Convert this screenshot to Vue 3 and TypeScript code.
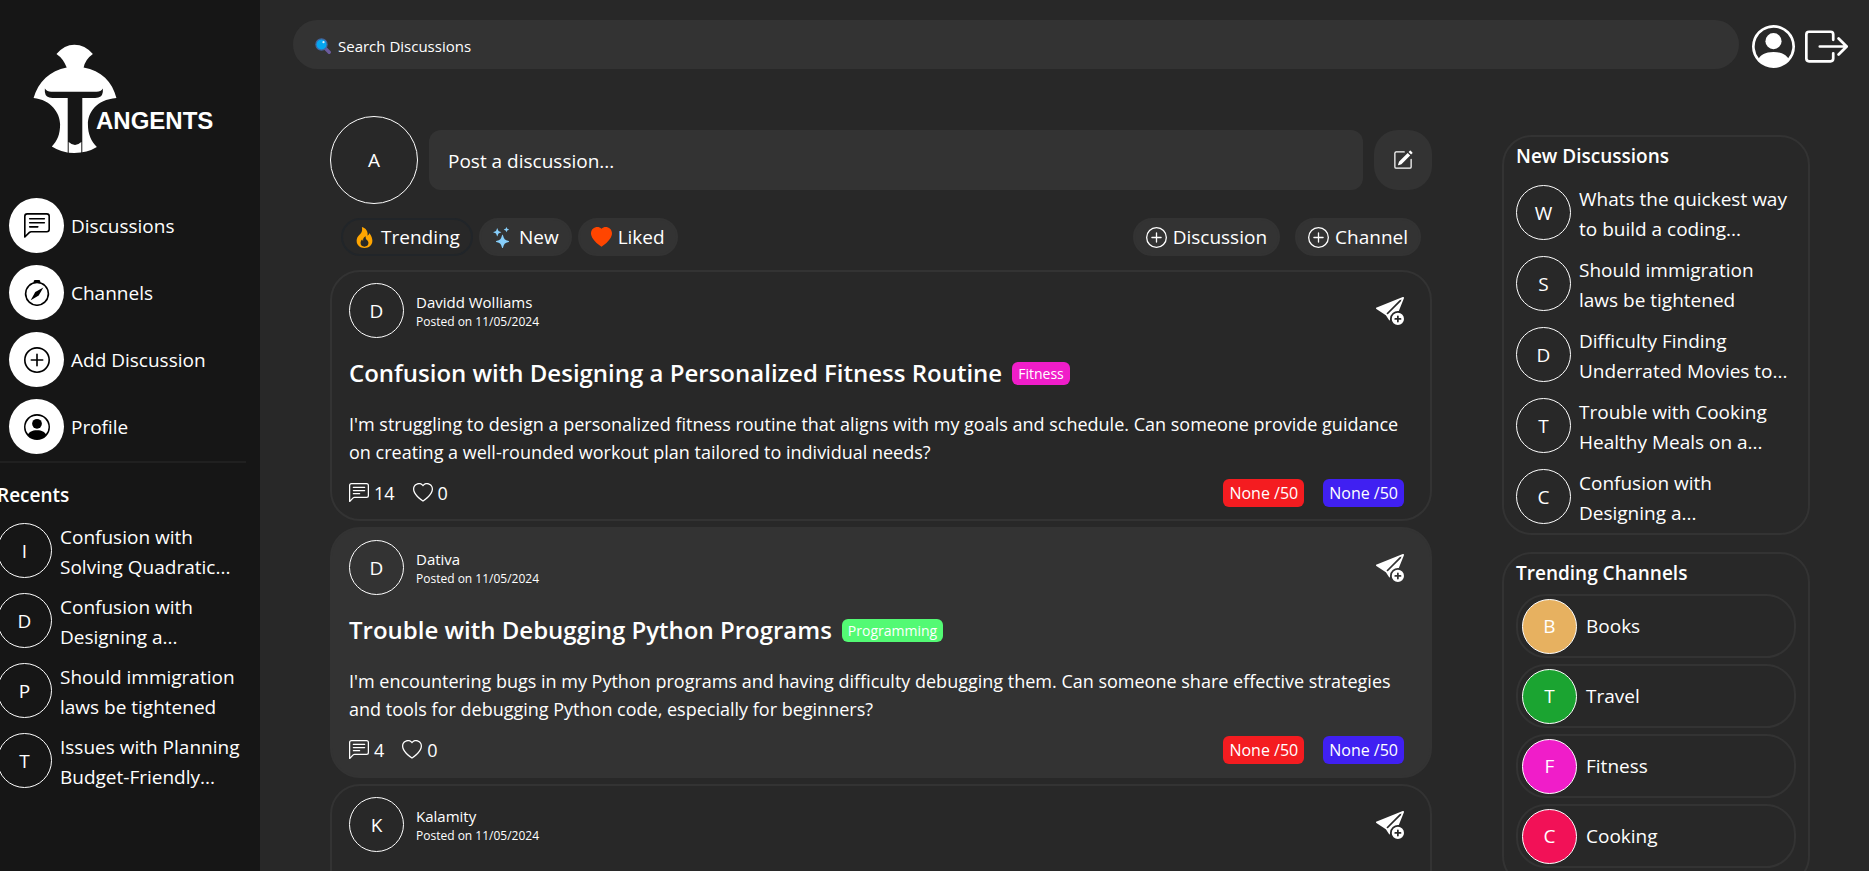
<script setup lang="ts">
import { ref } from 'vue'

type IconName = keyof typeof icons

const icons = {
  chat: [
    'M14 1a1 1 0 0 1 1 1v8a1 1 0 0 1-1 1H4.414A2 2 0 0 0 3 11.586l-2 2V2a1 1 0 0 1 1-1zM2 0a2 2 0 0 0-2 2v12.793a.5.5 0 0 0 .854.353l2.853-2.853A1 1 0 0 1 4.414 12H14a2 2 0 0 0 2-2V2a2 2 0 0 0-2-2z',
    'M3 3.5a.5.5 0 0 1 .5-.5h9a.5.5 0 0 1 0 1h-9a.5.5 0 0 1-.5-.5M3 6a.5.5 0 0 1 .5-.5h9a.5.5 0 0 1 0 1h-9A.5.5 0 0 1 3 6m0 2.5a.5.5 0 0 1 .5-.5h5a.5.5 0 0 1 0 1h-5a.5.5 0 0 1-.5-.5',
  ],
  compass: [
    'M8 16.016a7.5 7.5 0 0 0 1.962-14.74A1 1 0 0 0 9 0H7a1 1 0 0 0-.962 1.276A7.5 7.5 0 0 0 8 16.016m6.5-7.5a6.5 6.5 0 1 1-13 0 6.5 6.5 0 0 1 13 0',
    'm6.94 7.44 4.95-2.83-2.83 4.95-4.949 2.83z',
  ],
  plus: [
    'M8 15A7 7 0 1 1 8 1a7 7 0 0 1 0 14m0 1A8 8 0 1 0 8 0a8 8 0 0 0 0 16',
    'M8 4a.5.5 0 0 1 .5.5v3h3a.5.5 0 0 1 0 1h-3v3a.5.5 0 0 1-1 0v-3h-3a.5.5 0 0 1 0-1h3v-3A.5.5 0 0 1 8 4',
  ],
  person: [
    'M11 6a3 3 0 1 1-6 0 3 3 0 0 1 6 0',
    'M0 8a8 8 0 1 1 16 0A8 8 0 0 1 0 8m8-7a7 7 0 0 0-5.468 11.37C3.242 11.226 4.805 10 8 10s4.757 1.225 5.468 2.37A7 7 0 0 0 8 1',
  ],
  logout: [
    'M10 12.5a.5.5 0 0 1-.5.5h-8a.5.5 0 0 1-.5-.5v-9a.5.5 0 0 1 .5-.5h8a.5.5 0 0 1 .5.5v2a.5.5 0 0 0 1 0v-2A1.5 1.5 0 0 0 9.5 2h-8A1.5 1.5 0 0 0 0 3.5v9A1.5 1.5 0 0 0 1.5 14h8a1.5 1.5 0 0 0 1.5-1.5v-2a.5.5 0 0 0-1 0z',
    'M15.854 8.354a.5.5 0 0 0 0-.708l-3-3a.5.5 0 0 0-.708.708L14.293 7.5H5.5a.5.5 0 0 0 0 1h8.793l-2.147 2.146a.5.5 0 0 0 .708.708z',
  ],
  edit: [
    'M15.502 1.94a.5.5 0 0 1 0 .706L14.459 3.69l-2-2L13.502.646a.5.5 0 0 1 .707 0l1.293 1.293zm-1.75 2.456-2-2L4.939 9.21a.5.5 0 0 0-.121.196l-.805 2.414a.25.25 0 0 0 .316.316l2.414-.805a.5.5 0 0 0 .196-.12l6.813-6.814z',
    'M1 13.5A1.5 1.5 0 0 0 2.5 15h11a1.5 1.5 0 0 0 1.5-1.5v-6a.5.5 0 0 0-1 0v6a.5.5 0 0 1-.5.5h-11a.5.5 0 0 1-.5-.5v-11a.5.5 0 0 1 .5-.5H9a.5.5 0 0 0 0-1H2.5A1.5 1.5 0 0 0 1 2.5z',
  ],
  fire: [
    'M8 16c3.314 0 6-2 6-5.5 0-1.5-.5-4-2.5-6 .25 1.5-1.25 2-1.25 2C11 4 9 .5 6 0c.357 2 .5 4-2 6-1.25 1-2 2.729-2 4.5C2 14 4.686 16 8 16m0-1c-1.657 0-3-1-3-2.75 0-.75.25-2 1.25-3C6.125 10 7 10.5 7 10.5c-.375-1.25.5-3.25 2-3.5-.179 1-.25 2 1 3 .625.5 1 1.364 1 2.25C11 14 9.657 15 8 15',
  ],
  stars: [
    'M7.657 6.247c.11-.33.576-.33.686 0l.645 1.937a2.89 2.89 0 0 0 1.829 1.828l1.936.645c.33.11.33.576 0 .686l-1.937.645a2.89 2.89 0 0 0-1.828 1.829l-.645 1.936a.361.361 0 0 1-.686 0l-.645-1.937a2.89 2.89 0 0 0-1.828-1.828l-1.937-.645a.361.361 0 0 1 0-.686l1.937-.645a2.89 2.89 0 0 0 1.828-1.828zM3.794 1.148a.217.217 0 0 1 .412 0l.387 1.162c.173.518.579.924 1.097 1.097l1.162.387a.217.217 0 0 1 0 .412l-1.162.387A1.73 1.73 0 0 0 4.593 5.69l-.387 1.162a.217.217 0 0 1-.412 0L3.407 5.69A1.73 1.73 0 0 0 2.31 4.593l-1.162-.387a.217.217 0 0 1 0-.412l1.162-.387A1.73 1.73 0 0 0 3.407 2.31zM10.863.099a.145.145 0 0 1 .274 0l.258.774c.115.346.386.617.732.732l.774.258a.145.145 0 0 1 0 .274l-.774.258a1.16 1.16 0 0 0-.732.732l-.258.774a.145.145 0 0 1-.274 0l-.258-.774a1.16 1.16 0 0 0-.732-.732L9.1 2.137a.145.145 0 0 1 0-.274l.774-.258c.346-.115.617-.386.732-.732z',
  ],
  heartFill: ['M8 1.314C12.438-3.248 23.534 4.735 8 15-7.534 4.736 3.562-3.248 8 1.314'],
  heart: [
    'm8 2.748-.717-.737C5.6.281 2.514.878 1.4 3.053c-.523 1.023-.641 2.5.314 4.385.92 1.815 2.834 3.989 6.286 6.357 3.452-2.368 5.365-4.542 6.286-6.357.955-1.886.838-3.362.314-4.385C13.486.878 10.4.28 8.717 2.01zM8 15C-7.333 4.868 3.279-3.04 7.824 1.143q.09.083.176.171a3 3 0 0 1 .176-.17C12.72-3.042 23.333 4.867 8 15',
  ],
  send: [
    'M15.964.686a.5.5 0 0 0-.65-.65L.767 5.855H.766l-.452.18a.5.5 0 0 0-.082.887l.41.26.001.002 4.995 3.178 1.59 2.498C8 14 8 13 8 12.5a4.5 4.5 0 0 1 5.026-4.47zm-1.833 1.89L6.637 10.07l-.215-.338a.5.5 0 0 0-.154-.154l-.338-.215 7.494-7.494 1.178-.471z',
    'M16 12.5a3.5 3.5 0 1 1-7 0 3.5 3.5 0 0 1 7 0m-3.5-2a.5.5 0 0 0-.5.5v1h-1a.5.5 0 0 0 0 1h1v1a.5.5 0 0 0 1 0v-1h1a.5.5 0 0 0 0-1h-1v-1a.5.5 0 0 0-.5-.5',
  ],
}

interface NavItem { label: string; icon: IconName }
interface Topic { initial: string; lines: [string, string] }
interface Channel { name: string; color: string }
interface Post {
  author: string
  date: string
  title?: string
  tag?: Channel
  body?: string
  comments?: number
  likes?: number
}

const nav: NavItem[] = [
  { label: 'Discussions', icon: 'chat' },
  { label: 'Channels', icon: 'compass' },
  { label: 'Add Discussion', icon: 'plus' },
  { label: 'Profile', icon: 'person' },
]

const recents: Topic[] = [
  { initial: 'I', lines: ['Confusion with', 'Solving Quadratic...'] },
  { initial: 'D', lines: ['Confusion with', 'Designing a...'] },
  { initial: 'P', lines: ['Should immigration', 'laws be tightened'] },
  { initial: 'T', lines: ['Issues with Planning', 'Budget-Friendly...'] },
]

const newest: Topic[] = [
  { initial: 'W', lines: ['Whats the quickest way', 'to build a coding...'] },
  { initial: 'S', lines: ['Should immigration', 'laws be tightened'] },
  { initial: 'D', lines: ['Difficulty Finding', 'Underrated Movies to...'] },
  { initial: 'T', lines: ['Trouble with Cooking', 'Healthy Meals on a...'] },
  { initial: 'C', lines: ['Confusion with', 'Designing a...'] },
]

const channels: Channel[] = [
  { name: 'Books', color: '#e7b160' },
  { name: 'Travel', color: '#1ba431' },
  { name: 'Fitness', color: '#f01dc9' },
  { name: 'Cooking', color: '#f21157' },
]

const filters: { label: string; icon: IconName }[] = [
  { label: 'Trending', icon: 'fire' },
  { label: 'New', icon: 'stars' },
  { label: 'Liked', icon: 'heartFill' },
]

const posts: Post[] = [
  {
    author: 'Davidd Wolliams',
    date: '11/05/2024',
    title: 'Confusion with Designing a Personalized Fitness Routine',
    tag: { name: 'Fitness', color: '#f01dc9' },
    body: "I'm struggling to design a personalized fitness routine that aligns with my goals and schedule. Can someone provide guidance on creating a well-rounded workout plan tailored to individual needs?",
    comments: 14,
    likes: 0,
  },
  {
    author: 'Dativa',
    date: '11/05/2024',
    title: 'Trouble with Debugging Python Programs',
    tag: { name: 'Programming', color: '#53fa74' },
    body: "I'm encountering bugs in my Python programs and having difficulty debugging them. Can someone share effective strategies and tools for debugging Python code, especially for beginners?",
    comments: 4,
    likes: 0,
  },
  { author: 'Kalamity', date: '11/05/2024' },
]

const activeFilter = ref('Trending')
const query = ref('')
const draft = ref('')
</script>

<template>
  <div class="app">
    <aside class="sidebar">
      <a class="logo" href="#" aria-label="Tangents">
        <svg class="helmet" viewBox="99 132 252 332" aria-hidden="true">
          <path
            fill="#fff"
            d="M169 162Q193 134 223 134Q255 134 279 162Q256 178 251 203C304 212 338 246 350 295C288 300 264 340 264 374C264 404 274 425 291 443Q262 461 223 461Q186 461 155 441C172 424 180 404 180 374C180 340 152 300 100 295C114 246 150 212 200 203Q190 176 169 162Z"
          />
          <path
            fill="#161616"
            d="M134 266Q141 276 153 276H290Q303 276 309 266V277Q307 295 286 295H247V461H244V428Q225 446 206 428V461H203V295H157Q136 295 134 277Z"
          />
        </svg>
        <span class="wordmark">ANGENTS</span>
      </a>

      <nav class="nav">
        <a v-for="item in nav" :key="item.label" class="nav-link" href="#">
          <span class="nav-icon">
            <svg viewBox="0 0 16 16" aria-hidden="true">
              <path v-for="d in icons[item.icon]" :key="d" :d="d" fill-rule="evenodd" />
            </svg>
          </span>
          {{ item.label }}
        </a>
      </nav>

      <section class="recents">
        <h2 class="heading">Recents</h2>
        <a v-for="(topic, i) in recents" :key="i" class="topic" href="#">
          <span class="avatar">{{ topic.initial }}</span>
          <span>{{ topic.lines[0] }}<br />{{ topic.lines[1] }}</span>
        </a>
      </section>
    </aside>

    <div class="page">
      <header class="topbar">
        <label class="search">
          <svg class="lens" viewBox="0 0 16 16" aria-hidden="true">
            <path d="M10 10l4.200 4.200" stroke="#6b5b9e" stroke-width="3.400" stroke-linecap="round" />
            <circle cx="6.500" cy="6.500" r="5.600" fill="#05a6f0" stroke="#45659f" stroke-width="1.200" />
            <circle cx="8.500" cy="4.200" r="1.100" fill="#d8f3ff" />
          </svg>
          <input v-model="query" type="search" placeholder="Search Discussions" aria-label="Search Discussions" />
        </label>
        <button class="top-button" type="button" aria-label="Account">
          <svg viewBox="0 0 16 16"><path v-for="d in icons.person" :key="d" :d="d" fill-rule="evenodd" /></svg>
        </button>
        <button class="top-button" type="button" aria-label="Log out">
          <svg viewBox="0 0 16 16"><path v-for="d in icons.logout" :key="d" :d="d" /></svg>
        </button>
      </header>

      <div class="columns">
        <main class="feed">
          <form class="composer" @submit.prevent>
            <span class="avatar large">A</span>
            <input v-model="draft" type="text" placeholder="Post a discussion..." aria-label="Post a discussion" />
            <button type="submit" aria-label="Write">
              <svg viewBox="0 0 16 16"><path v-for="d in icons.edit" :key="d" :d="d" /></svg>
            </button>
          </form>

          <div class="toolbar">
            <button
              v-for="f in filters"
              :key="f.label"
              type="button"
              class="pill"
              :class="[f.icon, { active: activeFilter === f.label }]"
              @click="activeFilter = f.label"
            >
              <svg viewBox="0 0 16 16" aria-hidden="true">
                <path v-for="d in icons[f.icon]" :key="d" :d="d" />
              </svg>
              {{ f.label }}
            </button>
            <div class="create">
              <button v-for="kind in ['Discussion', 'Channel']" :key="kind" type="button" class="pill">
                <svg viewBox="0 0 16 16" aria-hidden="true">
                  <path v-for="d in icons.plus" :key="d" :d="d" />
                </svg>
                {{ kind }}
              </button>
            </div>
          </div>

          <article v-for="post in posts" :key="post.author" class="post">
            <div class="post-head">
              <span class="avatar">{{ post.author[0] }}</span>
              <div class="byline">
                <a href="#">{{ post.author }}</a>
                <small>Posted on {{ post.date }}</small>
              </div>
              <button type="button" class="send" aria-label="Share">
                <svg viewBox="0 0 16 16"><path v-for="d in icons.send" :key="d" :d="d" /></svg>
              </button>
            </div>
            <template v-if="post.title && post.tag">
              <div class="post-title">
                <h3>{{ post.title }}</h3>
                <span class="tag" :style="{ backgroundColor: post.tag.color }">{{ post.tag.name }}</span>
              </div>
              <p>{{ post.body }}</p>
              <div class="post-foot">
                <button type="button" class="count" aria-label="Comments">
                  <svg viewBox="0 0 16 16"><path v-for="d in icons.chat" :key="d" :d="d" /></svg>
                  {{ post.comments }}
                </button>
                <button type="button" class="count" aria-label="Likes">
                  <svg viewBox="0 0 16 16"><path v-for="d in icons.heart" :key="d" :d="d" /></svg>
                  {{ post.likes }}
                </button>
                <div class="seats">
                  <span class="seat red">None /50</span>
                  <span class="seat blue">None /50</span>
                </div>
              </div>
            </template>
          </article>
        </main>

        <aside class="rail">
          <section class="panel">
            <h2 class="heading">New Discussions</h2>
            <div class="topics">
              <a v-for="topic in newest" :key="topic.initial" class="topic" href="#">
                <span class="avatar">{{ topic.initial }}</span>
                <span>{{ topic.lines[0] }}<br />{{ topic.lines[1] }}</span>
              </a>
            </div>
          </section>
          <section class="panel">
            <h2 class="heading">Trending Channels</h2>
            <div class="channels">
              <a v-for="c in channels" :key="c.name" class="channel" href="#">
                <span class="avatar" :style="{ backgroundColor: c.color }">{{ c.name[0] }}</span>
                {{ c.name }}
              </a>
            </div>
          </section>
        </aside>
      </div>
    </div>
  </div>
</template>

<style>
body {
  background: #282828;
}
</style>

<style scoped>
.app {
  display: flex;
  height: 100vh;
  overflow: hidden;
  background: #282828;
  color: #fff;
  font-family: 'Open Sans', 'Noto Sans', sans-serif;
  font-size: 19px;
  line-height: 30px;
}
.app *,
.app {
  box-sizing: border-box;
}
a {
  color: inherit;
  text-decoration: none;
}
button,
input {
  font: inherit;
  color: inherit;
  background: none;
  border: 0;
  padding: 0;
  margin: 0;
}
button {
  cursor: pointer;
}
svg {
  display: block;
  flex: none;
  fill: currentColor;
}
h2,
h3,
p {
  margin: 0;
}
.heading {
  font-size: 19px;
  font-weight: 600;
  line-height: 30px;
}

/* Sidebar */
.sidebar {
  flex: none;
  width: 260px;
  overflow: hidden;
  background: #161616;
  padding-top: 44px;
}
.logo {
  display: flex;
  align-items: flex-end;
  margin-left: 33px;
}
.helmet {
  width: 84px;
  height: 110px;
}
.wordmark {
  margin: 0 0 20px -21px;
  font: bold 24px/26px 'Liberation Sans', Arial, sans-serif;
}
.nav {
  display: flex;
  flex-direction: column;
  gap: 12px;
  margin: 44px 14px 0 0;
  padding: 0 0 7px 9px;
  border-bottom: 2px solid #202020;
}
.nav-link {
  display: flex;
  align-items: center;
  gap: 7px;
}
.nav-icon {
  display: grid;
  place-items: center;
  width: 55px;
  height: 55px;
  border-radius: 50%;
  background: #fff;
  color: #000;
}
.nav-icon svg {
  width: 26px;
  height: 26px;
}
.recents {
  display: flex;
  flex-direction: column;
  gap: 10px;
  margin: 17px 0 0 -3px;
}
.recents .heading {
  margin-bottom: 2px;
}
.avatar {
  display: grid;
  place-items: center;
  flex: none;
  width: 55px;
  height: 55px;
  border: 1px solid #fff;
  border-radius: 50%;
}
.topic {
  display: flex;
  align-items: flex-start;
  gap: 8px;
  white-space: nowrap;
}
.topic .avatar {
  margin-top: 1px;
}

/* Header */
.page {
  flex: 1;
  min-width: 0;
}
.topbar {
  display: flex;
  align-items: center;
  padding: 20px 21px 0 33px;
}
.search {
  flex: 1;
  display: flex;
  align-items: center;
  gap: 7px;
  height: 49px;
  margin-right: 13px;
  padding: 2px 22px 0;
  border-radius: 25px;
  background: #333;
  font-size: 15px;
}
.search input {
  flex: 1;
}
.lens {
  width: 16px;
  height: 16px;
}
input {
  min-width: 0;
  outline: none;
  appearance: none;
}
input::placeholder {
  color: #fff;
  opacity: 1;
}
.top-button {
  padding-top: 3px;
}
.top-button + .top-button {
  margin-left: 10px;
}
.top-button svg {
  width: 43px;
  height: 43px;
}

/* Columns */
.columns {
  display: flex;
  gap: 70px;
  padding: 0 59px 0 70px;
}
.feed {
  flex: 1;
  min-width: 0;
  padding-top: 44px;
}
.composer {
  display: flex;
  align-items: center;
  gap: 11px;
  padding-top: 3px;
}
.avatar.large {
  width: 88px;
  height: 88px;
}
.composer input {
  flex: 1;
  height: 60px;
  padding: 2px 19px 0;
  border-radius: 12px;
  background: #333;
}
.composer button {
  display: grid;
  place-items: center;
  width: 58px;
  height: 60px;
  border-radius: 24px;
  background: #333;
}
.composer button svg {
  width: 20px;
  height: 20px;
}
.toolbar {
  display: flex;
  gap: 6px;
  margin: 14px 11px;
}
.pill {
  display: flex;
  align-items: center;
  gap: 6px;
  height: 38px;
  padding: 0 11px;
  border: 2px solid #333;
  border-radius: 20px;
  background: #333;
}
.pill svg {
  width: 21px;
  height: 21px;
}
.pill.active {
  border-color: #212529;
  background: none;
}
.pill.fire svg {
  color: #ffa500;
}
.pill.stars svg {
  color: #87cefa;
}
.pill.heartFill svg {
  color: #ff4500;
}
.create {
  display: flex;
  gap: 15px;
  margin-left: auto;
}

/* Posts */
.post {
  min-height: 251px;
  margin-bottom: 6px;
  padding: 11px 26px 11px 17px;
  border: 2px solid #333;
  border-radius: 30px;
}
.post:nth-of-type(even) {
  background: #333;
}
.post-head {
  display: flex;
  align-items: center;
  gap: 12px;
}
.byline {
  flex: 1;
  font-size: 15px;
  line-height: 22px;
}
.byline a,
.byline small {
  display: block;
}
.byline small {
  font-size: 12px;
  line-height: 18px;
}
.send svg {
  width: 28px;
  height: 28px;
}
.post-title {
  display: flex;
  align-items: center;
  gap: 10px;
  margin: 19px 0 21px;
}
h3 {
  font-size: 24px;
  font-weight: 600;
  line-height: 32px;
}
.tag {
  padding: 0 6px;
  border-radius: 6px;
  font-size: 14px;
  line-height: 23px;
}
p {
  font-size: 18px;
  line-height: 28px;
}
.post-foot {
  display: flex;
  align-items: center;
  gap: 18px;
  margin-top: 12px;
}
.count {
  display: flex;
  align-items: center;
  gap: 5px;
  font-size: 18px;
}
.count svg {
  width: 20px;
  height: 20px;
}
.seats {
  display: flex;
  gap: 19px;
  margin-left: auto;
}
.seat {
  padding: 0 6px;
  border-radius: 6px;
  font-size: 16px;
  line-height: 28px;
}
.red {
  background: #f41c20;
}
.blue {
  background: #4020f2;
}

/* Right rail */
.rail {
  flex: none;
  width: 308px;
  padding-top: 66px;
}
.panel {
  padding: 4px 12px 5px;
  border: 2px solid #333;
  border-radius: 30px;
}
.panel + .panel {
  margin-top: 17px;
  padding-bottom: 16px;
}
.topics {
  display: flex;
  flex-direction: column;
  gap: 11px;
  margin-top: 13px;
}
.channels {
  display: flex;
  flex-direction: column;
  gap: 6px;
  margin-top: 6px;
}
.channel {
  display: flex;
  align-items: center;
  gap: 9px;
  height: 64px;
  padding-left: 4px;
  border: 2px solid #333;
  border-radius: 30px;
}
</style>
